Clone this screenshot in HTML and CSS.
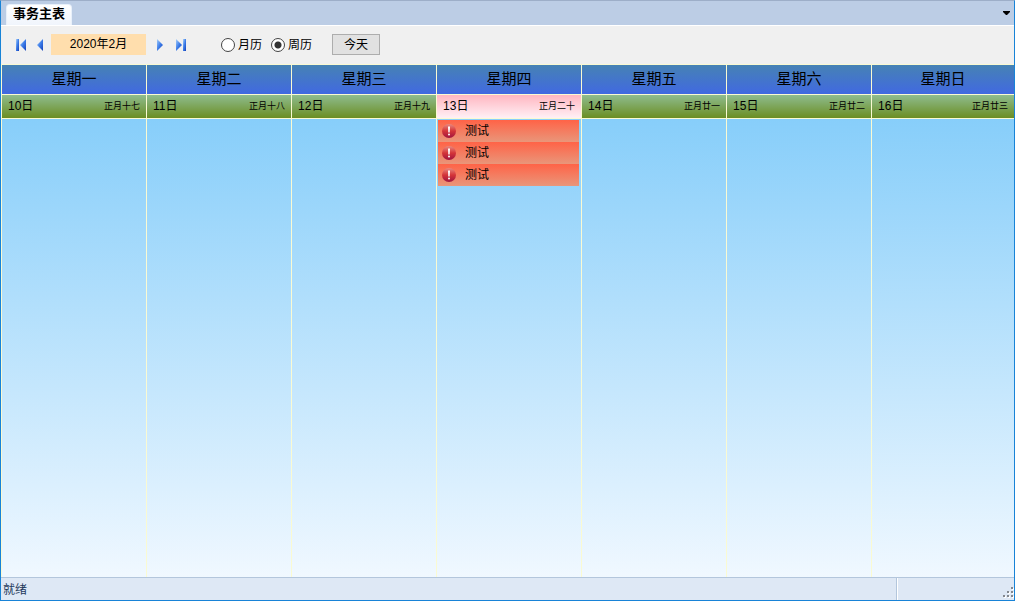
FILE: index.html
```
<!DOCTYPE html>
<html lang="zh-CN">
<head>
	<meta charset="UTF-8">
	<title>事务主表</title>
	<link rel="stylesheet" href="styles.css">
</head>
<body>
	<svg class="defs" width="0" height="0">
		<defs>
			<linearGradient id="blue" x1="0" y1="0" x2="1" y2="1">
				<stop offset="0" stop-color="#a8d0fa"/>
				<stop offset="0.5" stop-color="#3c7ce8"/>
				<stop offset="1" stop-color="#1440b8"/>
			</linearGradient>
			<linearGradient id="red" x1="0" y1="0" x2="0" y2="1">
				<stop offset="0" stop-color="#e88a80"/>
				<stop offset="0.5" stop-color="#d43438"/>
				<stop offset="1" stop-color="#a01440"/>
			</linearGradient>
			<symbol id="alert" viewBox="0 0 14 14">
				<circle cx="7" cy="7" r="7" fill="url(#red)"/>
				<path d="M6 2.4h2l-.3 6H6.3z" fill="#fff"/>
				<circle cx="7" cy="10.6" r="1" fill="#fff"/>
			</symbol>
		</defs>
	</svg>
	<div class="window">
		<div class="tabs">
			<button class="tab" type="button">事务主表</button>
			<button class="tab-menu" type="button" aria-label="菜单">
				<svg width="7" height="4" viewBox="0 0 7 4"><path d="M0 0h7v1L4 4H3L0 1z" fill="#000"/></svg>
			</button>
		</div>
		<div class="toolbar">
			<button class="nav" type="button" aria-label="第一页">
				<svg width="10" height="12" viewBox="0 0 10 12"><path d="M0 0h3v12H0z" fill="url(#blue)"/><path d="M10 0v12L4 6z" fill="url(#blue)"/></svg>
			</button>
			<button class="nav" type="button" aria-label="上一页">
				<svg width="6" height="12" viewBox="0 0 6 12"><path d="M6 0v12L0 6z" fill="url(#blue)"/></svg>
			</button>
			<div class="month">2020年2月</div>
			<button class="nav next" type="button" aria-label="下一页">
				<svg width="6" height="12" viewBox="0 0 6 12"><path d="M0 0v12l6-6z" fill="url(#blue)"/></svg>
			</button>
			<button class="nav" type="button" aria-label="最后一页">
				<svg width="10" height="12" viewBox="0 0 10 12"><path d="M7 0h3v12H7z" fill="url(#blue)"/><path d="M0 0v12l6-6z" fill="url(#blue)"/></svg>
			</button>
			<div class="views">
				<label><input type="radio" name="view">月历</label>
				<label><input type="radio" name="view" checked>周历</label>
			</div>
			<button class="today-btn" type="button">今天</button>
		</div>
		<div class="calendar">
			<table>
				<colgroup>
					<col class="day"><col class="day"><col class="day"><col class="day"><col class="day"><col class="day"><col>
				</colgroup>
				<thead>
					<tr class="week">
						<th>星期一</th>
						<th>星期二</th>
						<th>星期三</th>
						<th>星期四</th>
						<th>星期五</th>
						<th>星期六</th>
						<th>星期日</th>
					</tr>
				</thead>
				<tbody>
					<tr class="date">
						<td><div>10日<small>正月十七</small></div></td>
						<td><div>11日<small>正月十八</small></div></td>
						<td><div>12日<small>正月十九</small></div></td>
						<td class="cur"><div>13日<small>正月二十</small></div></td>
						<td><div>14日<small>正月廿一</small></div></td>
						<td><div>15日<small>正月廿二</small></div></td>
						<td><div>16日<small>正月廿三</small></div></td>
					</tr>
					<tr class="content">
						<td></td>
						<td></td>
						<td></td>
						<td>
							<ul>
								<li><svg width="14" height="14"><use href="#alert"/></svg>测试</li>
								<li><svg width="14" height="14"><use href="#alert"/></svg>测试</li>
								<li><svg width="14" height="14"><use href="#alert"/></svg>测试</li>
							</ul>
						</td>
						<td></td>
						<td></td>
						<td></td>
					</tr>
				</tbody>
			</table>
		</div>
		<div class="status">
			<span>就绪</span>
			<div class="grip">
				<svg width="11" height="11" viewBox="0 0 11 11">
					<path d="M9 1h2v2H9zM5 5h2v2H5zM9 5h2v2H9zM1 9h2v2H1zM5 9h2v2H5zM9 9h2v2H9z" fill="#fff"/>
					<path d="M8 0h2v2H8zM4 4h2v2H4zM8 4h2v2H8zM0 8h2v2H0zM4 8h2v2H4zM8 8h2v2H8z" fill="#84888f"/>
				</svg>
			</div>
		</div>
	</div>
</body>
</html>
```
FILE: styles.css
```
*{
	margin: 0;
	padding: 0;
	box-sizing: border-box;
	list-style: none;
}
body{
	height: 100vh;
	padding-bottom: 1px;
	font: 12px/16px "Liberation Sans", "Noto Sans CJK SC", sans-serif;
	color: #000;
	background: #fff;
}
button{
	font: inherit;
	color: inherit;
	border: 0;
	background: none;
}
svg{
	display: block;
}
.defs{
	position: absolute;
}
.window{
	display: flex;
	flex-direction: column;
	height: 100%;
	border: 1px solid #1883d7;
	border-top-color: #9daec8;
	background: #f0f0f0;
}
/*选项卡*/
.tabs{
	display: flex;
	justify-content: space-between;
	height: 25px;
	padding: 3px 4px 0 5px;
	border-bottom: 1px solid #fff;
	background: #bccde5;
}
.tab{
	padding: 0 6px 2px;
	border: 1px solid #e8f0fa;
	border-bottom: 0;
	border-radius: 4px 4px 0 0;
	background: linear-gradient(#fff, #f0f5fc);
	font-size: 13px;
	font-weight: bold;
}
.tab-menu{
	padding-bottom: 3px;
}
/*工具栏*/
.toolbar{
	display: flex;
	align-items: center;
	height: 38px;
	padding: 0 15px 1px;
}
.nav{
	margin-right: 11px;
}
.nav:nth-child(2){
	margin-right: 8px;
}
.next{
	margin-right: 13px;
}
.month{
	width: 95px;
	height: 21px;
	margin-right: 11px;
	line-height: 20px;
	text-align: center;
	background: #ffdead;
}
.views{
	display: flex;
	gap: 9px;
	margin: 0 20px 0 24px;
}
.views label{
	display: flex;
	align-items: center;
	gap: 3px;
}
.views input{
	appearance: none;
	width: 14px;
	height: 14px;
	border: 1px solid #444;
	border-radius: 50%;
	background: #fff;
}
.views input:checked{
	background: radial-gradient(circle, #333 3px, #fff 4px);
}
.today-btn{
	width: 48px;
	height: 21px;
	border: 1px solid #adadad;
	background: #e1e1e1;
}
/*周历*/
.calendar{
	flex: 1;
	min-height: 0;
	border: 1px solid #fafad2;
	border-width: 1px 0 0 1px;
}
table{
	width: 100%;
	height: 100%;
	table-layout: fixed;
	border-spacing: 0;
}
.day{
	width: 14.33%;
}
th,td{
	border-right: 1px solid #fafad2;
	background-clip: padding-box;
}
th:last-child,td:last-child{
	border-right: 0;
}
.week th{
	height: 30px;
	padding-bottom: 2px;
	border-bottom: 1px solid #fafad2;
	font-size: 15px;
	font-weight: normal;
	background-image: linear-gradient(#4682b4, #4169e1);
}
.date td{
	height: 24px;
	padding: 0 6px 2px;
	border-bottom: 1px solid #fafad2;
	background-image: linear-gradient(#8fbc8f, #6b8e23);
}
.date .cur{
	background-image: linear-gradient(#ffb6c1, #fff0f5);
}
.date div{
	display: flex;
	justify-content: space-between;
	align-items: center;
}
.date small{
	font-size: 9px;
}
.content td{
	padding: 1px 2px 0 1px;
	vertical-align: top;
	background-image: linear-gradient(#87cefa, #f0f8ff);
}
.content li{
	display: flex;
	align-items: center;
	gap: 9px;
	height: 22px;
	padding-left: 4px;
	background: linear-gradient(#ff6347, #e9967a);
}
/*状态栏*/
.status{
	display: flex;
	justify-content: space-between;
	height: 23px;
	padding-left: 2px;
	line-height: 24px;
	color: #1e395b;
	border-top: 1px solid #b3c6dc;
	background: #dee8f5;
}
.grip{
	display: flex;
	justify-content: flex-end;
	align-items: flex-end;
	width: 118px;
	padding: 0 0 2px;
	border-left: 1px solid #b3c6dc;
	box-shadow: inset 1px 0 #fff;
}
```
